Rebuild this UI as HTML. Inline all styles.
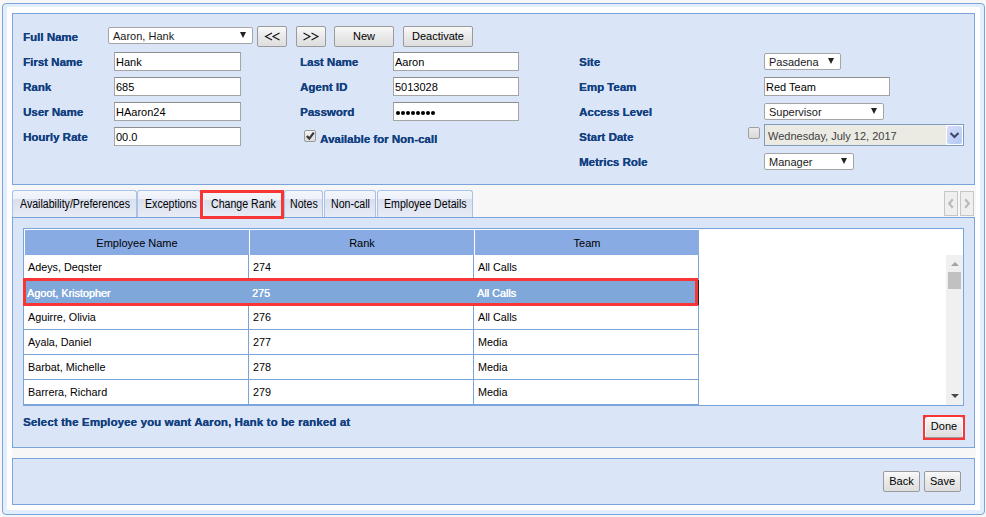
<!DOCTYPE html>
<html><head><meta charset="utf-8">
<style>
*{box-sizing:border-box;margin:0;padding:0}
html,body{width:986px;height:517px;overflow:hidden;background:#f7f7f7;font-family:"Liberation Sans",sans-serif}
.a{position:absolute}
#outer{left:2px;top:3px;width:983px;height:512px;border:1px solid #7ba4db;border-radius:4px;background:#e3eefc}
#inner{left:7px;top:7px;width:973px;height:503px;background:#fff}
.panel{position:absolute;left:12px;width:963px;border:1px solid #7ba4db;background:#dae6f8}
.strip{position:absolute;left:12px;width:964px;background:#f7f7f7}
.lbl{position:absolute;font:bold 11.5px/14px "Liberation Sans",sans-serif;color:#123f7f;white-space:nowrap;text-shadow:0.25px 0 0 #123f7f}
.inp{position:absolute;height:19px;border:1px solid #a5a5a5;border-top-color:#8e8e8e;background:#fff;font:11px/18px "Liberation Sans",sans-serif;color:#000;padding-left:1px;white-space:nowrap}
.sel{position:absolute;height:17px;border:1px solid #a5a5a5;border-radius:2px;background:#fff;font:11px/16px "Liberation Sans",sans-serif;color:#1a1a1a;padding-left:4px;white-space:nowrap}
.sel i{position:absolute;top:4px;width:0;height:0;border-left:3px solid transparent;border-right:3px solid transparent;border-top:6px solid #222}
.btn{position:absolute;height:21px;border:1px solid #9a9a9a;border-radius:2px;background:linear-gradient(#f9f9f9,#e9e9e9 50%,#dedede);font:11px/19px "Liberation Sans",sans-serif;color:#000;text-align:center;white-space:nowrap}
.tab{position:absolute;top:190px;height:27px;border:1px solid #a8c2e8;border-bottom:none;border-radius:3px 3px 0 0;background:linear-gradient(#f4f6fb 0,#eef1f9 8px,#d9dfee 8px,#e0e5f1 17px,#e9ecf6 100%);font:10.8px/26px "Liberation Sans",sans-serif;color:#000;white-space:nowrap;padding-left:7px}
.tt{display:inline-block;font-size:12px;transform:scaleX(.884);transform-origin:0 50%}
.red{position:absolute;border:3px solid #f83636}
.th{position:absolute;top:230px;height:25px;background:#89abe3;font:11px/27px "Liberation Sans",sans-serif;color:#000;text-align:center}
.row{position:absolute;left:24px;width:675px;height:25px;font:10.8px/24px "Liberation Sans",sans-serif;color:#000;background:#fff}
.sel2 span{border-color:#7fa7d9 !important;text-shadow:0.35px 0 0 #fff;padding-left:3px !important;line-height:26px}
.row span{position:absolute;top:0;height:25px;border-right:1px solid #7ba4db;border-bottom:1px solid #7ba4db;padding-left:4px;white-space:nowrap}
</style></head><body>
<div id="outer" class="a"></div>
<div id="inner" class="a"></div>

<!-- panel 1 -->
<div class="panel" style="top:13px;height:172px"></div>
<div class="strip" style="top:185px;height:32px"></div>
<div class="panel" style="top:217px;height:231px"></div>
<div class="strip" style="top:448px;height:10px"></div>
<div class="panel" style="top:458px;height:47px"></div>

<!-- labels col 1 -->
<div class="lbl" style="left:23px;top:30px">Full Name</div>
<div class="lbl" style="left:23px;top:55px">First Name</div>
<div class="lbl" style="left:23px;top:80px">Rank</div>
<div class="lbl" style="left:23px;top:105px">User Name</div>
<div class="lbl" style="left:23px;top:130px">Hourly Rate</div>

<div class="sel" style="left:108px;top:27px;width:145px">Aaron, Hank<i style="left:131px"></i></div>
<div class="btn" style="left:257px;top:26px;width:30px"></div><svg class="a" style="left:257px;top:26px" width="30" height="21"><path d="M15 7 L8.5 10.5 L15 14 M22.5 7 L16 10.5 L22.5 14" fill="none" stroke="#111" stroke-width="1.1"/></svg>
<div class="btn" style="left:296px;top:26px;width:30px"></div><svg class="a" style="left:296px;top:26px" width="30" height="21"><path d="M7.5 7 L14 10.5 L7.5 14 M15.5 7 L22 10.5 L15.5 14" fill="none" stroke="#111" stroke-width="1.1"/></svg>
<div class="btn" style="left:334px;top:26px;width:60px">New</div>
<div class="btn" style="left:403px;top:26px;width:70px">Deactivate</div>

<div class="inp" style="left:114px;top:52px;width:127px">Hank</div>
<div class="inp" style="left:114px;top:77px;width:127px">685</div>
<div class="inp" style="left:114px;top:102px;width:127px">HAaron24</div>
<div class="inp" style="left:114px;top:127px;width:127px">00.0</div>

<!-- col 2 -->
<div class="lbl" style="left:300px;top:55px">Last Name</div>
<div class="lbl" style="left:300px;top:80px">Agent ID</div>
<div class="lbl" style="left:300px;top:105px">Password</div>
<div class="inp" style="left:393px;top:52px;width:126px">Aaron</div>
<div class="inp" style="left:393px;top:77px;width:126px">5013028</div>
<div class="inp" style="left:393px;top:102px;width:126px"></div><svg class="a" style="left:393px;top:102px" width="60" height="19" fill="#000"><circle cx="5.0" cy="11" r="2.05"/><circle cx="10.0" cy="11" r="2.05"/><circle cx="15.0" cy="11" r="2.05"/><circle cx="20.0" cy="11" r="2.05"/><circle cx="25.0" cy="11" r="2.05"/><circle cx="30.0" cy="11" r="2.05"/><circle cx="35.0" cy="11" r="2.05"/><circle cx="40.0" cy="11" r="2.05"/></svg>
<div class="a" style="left:304px;top:130px;width:12px;height:12px;border:1px solid #9a9a9a;border-radius:2px;background:linear-gradient(#f4f4f4,#dcdcdc)"></div>
<svg class="a" style="left:304px;top:129px" width="13" height="13" viewBox="0 0 13 13"><path d="M2.8 7 L5.3 9.6 L9.8 3.6" fill="none" stroke="#3a3a3a" stroke-width="2.3"/></svg>
<div class="lbl" style="left:320px;top:132px">Available for Non-call</div>

<!-- col 3 -->
<div class="lbl" style="left:579px;top:55px">Site</div>
<div class="lbl" style="left:579px;top:80px">Emp Team</div>
<div class="lbl" style="left:579px;top:105px">Access Level</div>
<div class="lbl" style="left:579px;top:130px">Start Date</div>
<div class="lbl" style="left:579px;top:155px">Metrics Role</div>

<div class="sel" style="left:764px;top:53px;width:77px">Pasadena<i style="left:63px"></i></div>
<div class="inp" style="left:764px;top:77px;width:126px">Red Team</div>
<div class="sel" style="left:764px;top:103px;width:120px">Supervisor<i style="left:106px"></i></div>
<div class="a" style="left:748px;top:127px;width:12px;height:12px;border:1px solid #a0a0a0;border-radius:2px;background:linear-gradient(#ececec,#d8d8d8)"></div>
<div class="a" style="left:764px;top:124px;width:200px;height:22px;border:1px solid #7f9db9;background:#ebebe4;font:11px/22px 'Liberation Sans',sans-serif;color:#3e3e3e;padding-left:3px">Wednesday, July 12, 2017</div>
<div class="a" style="left:946px;top:125px;width:17px;height:20px;background:#fff"></div>
<div class="a" style="left:947px;top:126px;width:15px;height:18px;border-radius:2px;background:linear-gradient(135deg,#d6dcf8,#b3cbf5)"></div>
<svg class="a" style="left:947px;top:126px" width="15" height="18" viewBox="0 0 15 18"><path d="M3.5 7 L7.5 11 L11.5 7" fill="none" stroke="#3b4766" stroke-width="2"/></svg>
<div class="sel" style="left:764px;top:153px;width:90px">Manager<i style="left:76px"></i></div>

<!-- tabs -->
<div class="tab" style="left:12px;width:125px"><span class="tt">Availability/Preferences</span></div>
<div class="tab" style="left:137px;width:64px"><span class="tt">Exceptions</span></div>
<div class="tab" style="left:203px;width:79px;padding-left:7px;border-left-color:#f4f7fc;border-top:2px solid #f2c468;line-height:25px;background:linear-gradient(#f4f6fb 0,#eef1f9 8px,#d9dfee 8px,#e0e5f1 17px,#e9ecf6 100%)"><span class="tt">Change Rank</span></div>
<div class="tab" style="left:284px;width:39px;padding-left:5px"><span class="tt">Notes</span></div>
<div class="tab" style="left:324px;width:52px;padding-left:6px"><span class="tt">Non-call</span></div>
<div class="tab" style="left:377px;width:96px;padding-left:6px"><span class="tt">Employee Details</span></div>
<div class="red" style="left:200px;top:190px;width:84px;height:29px"></div>
<div class="a" style="left:944px;top:191px;width:14px;height:25px;border:1px solid #c6c6c6;background:#efefef"></div>
<div class="a" style="left:960px;top:191px;width:14px;height:25px;border:1px solid #c6c6c6;background:#efefef"></div>
<svg class="a" style="left:944px;top:191px" width="14" height="25"><path d="M8.8 8.3 L5.2 12.5 L8.8 16.7" fill="none" stroke="#bababa" stroke-width="2.2"/></svg>
<svg class="a" style="left:960px;top:191px" width="14" height="25"><path d="M5.2 8.3 L8.8 12.5 L5.2 16.7" fill="none" stroke="#bababa" stroke-width="2.2"/></svg>

<!-- table -->
<div class="a" style="left:23px;top:228px;width:941px;height:178px;border:1px solid #7ba4db;background:#fff"></div>
<div class="th" style="left:25px;width:224px">Employee Name</div>
<div class="th" style="left:250px;width:224px">Rank</div>
<div class="th" style="left:475px;width:224px">Team</div>

<div class="row" style="top:255px"><span style="left:0;width:225px">Adeys, Deqster</span><span style="left:225px;width:225px">274</span><span style="left:450px;width:225px">All Calls</span></div>
<div class="row sel2" style="top:280px;background:#7fa7d9;color:#fff"><span style="left:0;width:225px">Agoot, Kristopher</span><span style="left:225px;width:225px">275</span><span style="left:450px;width:225px">All Calls</span></div>
<div class="row" style="top:305px"><span style="left:0;width:225px">Aguirre, Olivia</span><span style="left:225px;width:225px">276</span><span style="left:450px;width:225px">All Calls</span></div>
<div class="row" style="top:330px"><span style="left:0;width:225px">Ayala, Daniel</span><span style="left:225px;width:225px">277</span><span style="left:450px;width:225px">Media</span></div>
<div class="row" style="top:355px"><span style="left:0;width:225px">Barbat, Michelle</span><span style="left:225px;width:225px">278</span><span style="left:450px;width:225px">Media</span></div>
<div class="row" style="top:380px"><span style="left:0;width:225px">Barrera, Richard</span><span style="left:225px;width:225px">279</span><span style="left:450px;width:225px">Media</span></div>
<div class="red" style="left:23px;top:278px;width:675px;height:28px"></div>
<div class="a" style="left:698px;top:280px;width:1px;height:25px;background:#222"></div>

<!-- scrollbar -->
<div class="a" style="left:946px;top:255px;width:17px;height:150px;background:#f0f0f0"></div>
<div class="a" style="left:950.5px;top:262px;width:0;height:0;border-left:4px solid transparent;border-right:4px solid transparent;border-bottom:4px solid #a3a3a3"></div>
<div class="a" style="left:948px;top:272px;width:13px;height:17px;background:#c1c1c1"></div>
<div class="a" style="left:950.5px;top:394px;width:0;height:0;border-left:4px solid transparent;border-right:4px solid transparent;border-top:4.5px solid #4a4a4a"></div>

<div class="lbl" style="left:23px;top:415px;letter-spacing:0.12px">Select the Employee you want Aaron, Hank to be ranked at</div>
<div class="red" style="left:923px;top:415px;width:42px;height:25px"></div>
<div class="btn" style="left:925px;top:417px;width:38px;height:21px;line-height:16px;border-color:#fff #fff #9a9a9a #fff">Done</div>

<div class="btn" style="left:883px;top:471px;width:37px">Back</div>
<div class="btn" style="left:924px;top:471px;width:37px">Save</div>
</body></html>
